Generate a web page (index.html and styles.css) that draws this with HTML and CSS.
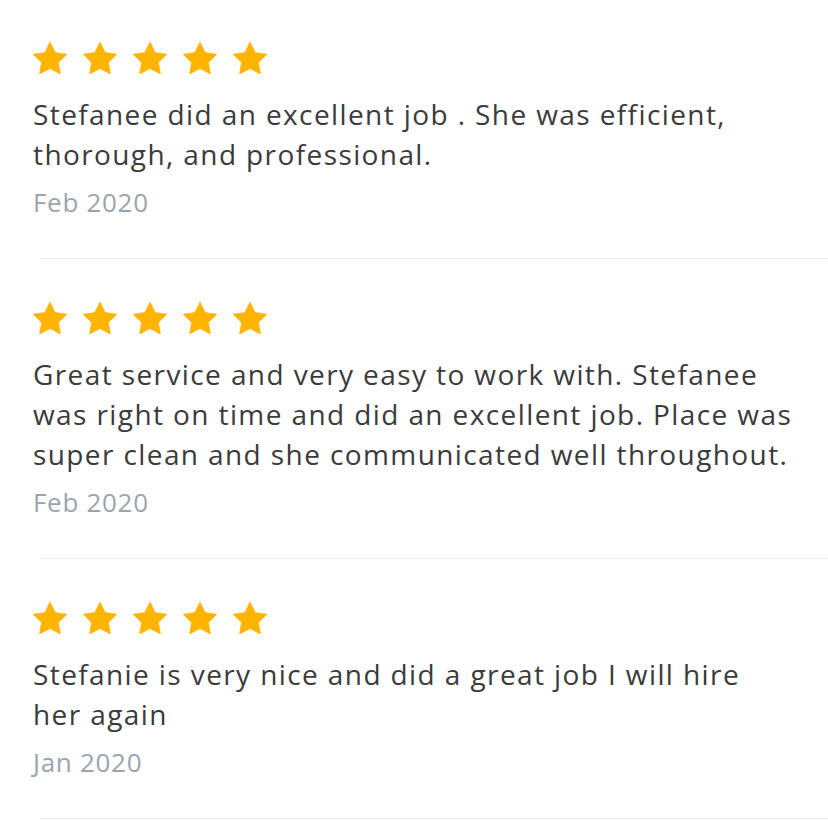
FILE: index.html
```html
<!DOCTYPE html>
<html lang="en">
<head>
<meta charset="utf-8">
<title>Reviews</title>
<link rel="stylesheet" href="styles.css">
</head>
<body>
<ul class="reviews">
  <li class="review">
    <div class="review-body">
      <div class="stars">
        <svg class="star" viewBox="2 2 20 19" width="34" height="32"><path d="M12 2l3.09 6.26L22 9.27l-5 4.87 1.18 6.88L12 17.77l-6.18 3.25L7 14.14 2 9.27l6.91-1.01L12 2z"/></svg>
        <svg class="star" viewBox="2 2 20 19" width="34" height="32"><path d="M12 2l3.09 6.26L22 9.27l-5 4.87 1.18 6.88L12 17.77l-6.18 3.25L7 14.14 2 9.27l6.91-1.01L12 2z"/></svg>
        <svg class="star" viewBox="2 2 20 19" width="34" height="32"><path d="M12 2l3.09 6.26L22 9.27l-5 4.87 1.18 6.88L12 17.77l-6.18 3.25L7 14.14 2 9.27l6.91-1.01L12 2z"/></svg>
        <svg class="star" viewBox="2 2 20 19" width="34" height="32"><path d="M12 2l3.09 6.26L22 9.27l-5 4.87 1.18 6.88L12 17.77l-6.18 3.25L7 14.14 2 9.27l6.91-1.01L12 2z"/></svg>
        <svg class="star" viewBox="2 2 20 19" width="34" height="32"><path d="M12 2l3.09 6.26L22 9.27l-5 4.87 1.18 6.88L12 17.77l-6.18 3.25L7 14.14 2 9.27l6.91-1.01L12 2z"/></svg>
      </div>
      <p class="text">Stefanee did an excellent job . She was efficient, thorough, and professional.</p>
      <p class="date">Feb 2020</p>
    </div>
    <div class="divider"></div>
  </li>
  <li class="review">
    <div class="review-body">
      <div class="stars">
        <svg class="star" viewBox="2 2 20 19" width="34" height="32"><path d="M12 2l3.09 6.26L22 9.27l-5 4.87 1.18 6.88L12 17.77l-6.18 3.25L7 14.14 2 9.27l6.91-1.01L12 2z"/></svg>
        <svg class="star" viewBox="2 2 20 19" width="34" height="32"><path d="M12 2l3.09 6.26L22 9.27l-5 4.87 1.18 6.88L12 17.77l-6.18 3.25L7 14.14 2 9.27l6.91-1.01L12 2z"/></svg>
        <svg class="star" viewBox="2 2 20 19" width="34" height="32"><path d="M12 2l3.09 6.26L22 9.27l-5 4.87 1.18 6.88L12 17.77l-6.18 3.25L7 14.14 2 9.27l6.91-1.01L12 2z"/></svg>
        <svg class="star" viewBox="2 2 20 19" width="34" height="32"><path d="M12 2l3.09 6.26L22 9.27l-5 4.87 1.18 6.88L12 17.77l-6.18 3.25L7 14.14 2 9.27l6.91-1.01L12 2z"/></svg>
        <svg class="star" viewBox="2 2 20 19" width="34" height="32"><path d="M12 2l3.09 6.26L22 9.27l-5 4.87 1.18 6.88L12 17.77l-6.18 3.25L7 14.14 2 9.27l6.91-1.01L12 2z"/></svg>
      </div>
      <p class="text">Great service and very easy to work with. Stefanee was right on time and did an excellent job. Place was super clean and she communicated well throughout.</p>
      <p class="date">Feb 2020</p>
    </div>
    <div class="divider"></div>
  </li>
  <li class="review">
    <div class="review-body">
      <div class="stars">
        <svg class="star" viewBox="2 2 20 19" width="34" height="32"><path d="M12 2l3.09 6.26L22 9.27l-5 4.87 1.18 6.88L12 17.77l-6.18 3.25L7 14.14 2 9.27l6.91-1.01L12 2z"/></svg>
        <svg class="star" viewBox="2 2 20 19" width="34" height="32"><path d="M12 2l3.09 6.26L22 9.27l-5 4.87 1.18 6.88L12 17.77l-6.18 3.25L7 14.14 2 9.27l6.91-1.01L12 2z"/></svg>
        <svg class="star" viewBox="2 2 20 19" width="34" height="32"><path d="M12 2l3.09 6.26L22 9.27l-5 4.87 1.18 6.88L12 17.77l-6.18 3.25L7 14.14 2 9.27l6.91-1.01L12 2z"/></svg>
        <svg class="star" viewBox="2 2 20 19" width="34" height="32"><path d="M12 2l3.09 6.26L22 9.27l-5 4.87 1.18 6.88L12 17.77l-6.18 3.25L7 14.14 2 9.27l6.91-1.01L12 2z"/></svg>
        <svg class="star" viewBox="2 2 20 19" width="34" height="32"><path d="M12 2l3.09 6.26L22 9.27l-5 4.87 1.18 6.88L12 17.77l-6.18 3.25L7 14.14 2 9.27l6.91-1.01L12 2z"/></svg>
      </div>
      <p class="text">Stefanie is very nice and did a great job I will hire her again</p>
      <p class="date">Jan 2020</p>
    </div>
    <div class="divider"></div>
  </li>
</ul>
</body>
</html>
```
FILE: styles.css
```css
html, body {
  margin: 0;
  padding: 0;
  background: #ffffff;
}

body {
  font-family: "Open Sans", "Noto Sans", sans-serif;
  color: #3b3b3b;
  overflow: hidden;
}

.reviews {
  list-style: none;
  margin: 0;
  padding: 0;
}

.review {
  padding-top: 42px;
}

.review:first-child {
  padding-top: 41px;
}

.review-body {
  width: 760px;
  padding-left: 33px;
}

.stars {
  display: flex;
  gap: 16px;
  height: 33px;
  align-items: center;
}

.star {
  display: block;
  fill: #ffb400;
  stroke: #ffb400;
  stroke-width: 0.4;
  stroke-linejoin: round;
}

.text {
  margin: 20px 0 0;
  font-size: 28px;
  line-height: 40px;
  letter-spacing: 1.4px;
}

.date {
  margin: 10px 0 0;
  font-size: 26px;
  line-height: 36px;
  letter-spacing: 0.7px;
  color: #9ba4ae;
}

.divider {
  margin: 38px 0 0 40px;
  height: 1px;
  background: #ebebeb;
}
```
